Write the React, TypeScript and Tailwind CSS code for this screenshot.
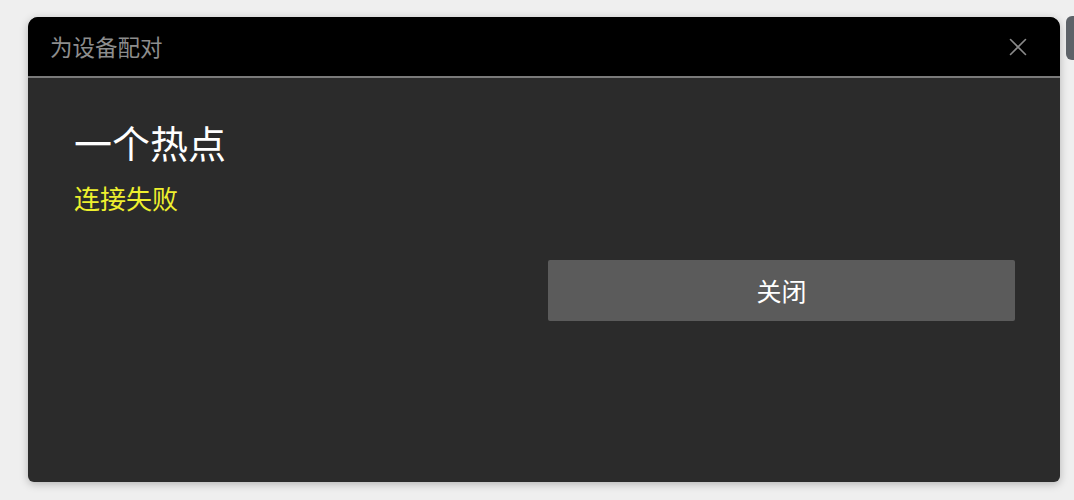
import React from "react";

const cjk = { fontFamily: '"Noto Sans CJK SC", "Noto Sans", sans-serif' };

function CloseIcon() {
  return (
    <svg width="18" height="18" viewBox="0 0 18 18" fill="none">
      <path d="M1.5 1.5 L16.5 16.5 M16.5 1.5 L1.5 16.5" stroke="#8a8a8a" strokeWidth="1.6" strokeLinecap="round" />
    </svg>
  );
}

export default function App() {
  return (
    <div className="flex h-[500px] w-full overflow-hidden bg-[#efefef] pl-[28px] pt-[17px]" style={cjk}>
      <div className="flex h-[465px] w-[1032px] shrink-0 flex-col overflow-hidden rounded-t-[10px] rounded-b-[6px] bg-[#2b2b2b] shadow-[0_2px_8px_rgba(0,0,0,0.25)]">
        <div className="flex h-[59px] shrink-0 items-center justify-between bg-black pl-[22px] pr-[33px]">
          <span className="text-[22.5px] leading-none text-[#8d8d8d]">为设备配对</span>
          <CloseIcon />
        </div>
        <div className="h-[2px] shrink-0 bg-[#7a7a7a]" />
        <div className="flex flex-1 flex-col pl-[46px] pr-[45px] pt-[45px]">
          <h1 className="text-[38px] font-normal leading-none text-white">一个热点</h1>
          <p className="mt-[24px] text-[26px] leading-none text-[#eef02e]">连接失败</p>
          <div className="mt-[49px] flex justify-end">
            <button className="flex h-[61px] w-[467px] items-center justify-center rounded-[2px] bg-[#5b5b5b] text-[25px] leading-none text-white">
              关闭
            </button>
          </div>
        </div>
      </div>
      <div className="ml-[6px] mt-[-1px] h-[44px] w-[14px] shrink-0 rounded-[6px] bg-[#5d6268]" />
    </div>
  );
}
